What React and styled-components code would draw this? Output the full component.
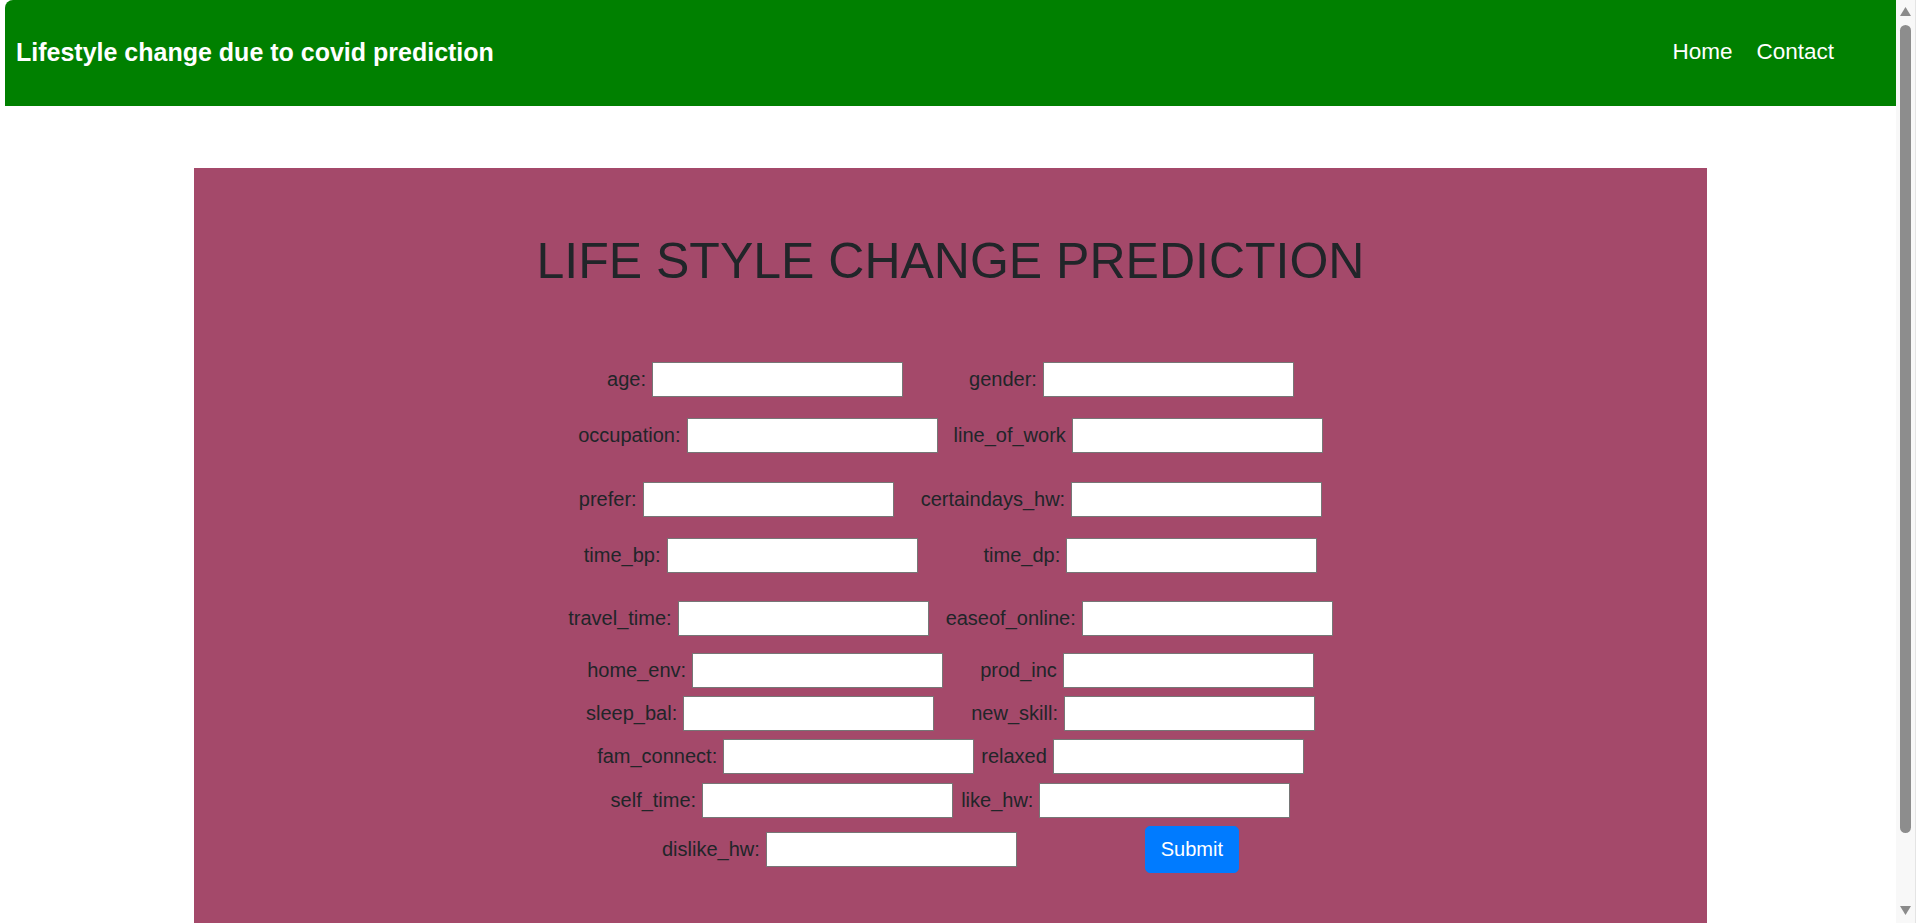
import React from 'react';
import styled, { createGlobalStyle } from 'styled-components';

const GlobalStyle = createGlobalStyle`
  html, body {
    margin: 0;
    height: 100%;
    overflow: hidden;
  }

  body {
    background: #fff;
    font-family: "Liberation Sans", Arial, sans-serif;
    color: #212529;
  }
`;

const Window = styled.div`
  display: flex;
  height: 100vh;
  overflow: hidden;
`;

const Viewport = styled.div`
  flex: 1;
  min-width: 0;
  padding-left: 5px;
  overflow: hidden;
`;

const ScrollBar = styled.div`
  width: 24px;
  flex-shrink: 0;
  box-sizing: border-box;
  display: flex;
  flex-direction: column;
  align-items: flex-start;
  padding-left: 4px;
  background: linear-gradient(to right, #f8f8f8 0 19px, #e4e4e4 19px 20px, #fff 20px);
`;

const Arrow = styled.svg`
  width: 11px;
  height: 9px;
  margin-top: ${props => props.$mt || 0}px;
  margin-bottom: ${props => props.$mb || 0}px;
  fill: #8b8b8b;
`;

const Thumb = styled.div`
  width: 11px;
  height: 808px;
  margin-top: 9px;
  border-radius: 6px;
  background: #8d8d8d;
`;

const Spacer = styled.div`
  flex: 1;
`;

const NavBar = styled.nav`
  height: 106px;
  box-sizing: border-box;
  display: flex;
  align-items: center;
  justify-content: space-between;
  padding: 0 62px 2px 11px;
  background: #008000;
  border-top-left-radius: 8px;
`;

const Brand = styled.a`
  color: #fff;
  font-size: 25px;
  font-weight: 700;
  text-decoration: none;
`;

const NavLinks = styled.div`
  display: flex;
  gap: 24px;
`;

const NavLink = styled.a`
  color: #fff;
  font-size: 22.5px;
  text-decoration: none;
`;

const Card = styled.section`
  width: 1513px;
  min-height: 814px;
  box-sizing: border-box;
  margin: 62px auto 0;
  padding: 62.7px 0 0;
  background: #a4496a;
`;

const Title = styled.h1`
  margin: 0;
  font-size: 50px;
  line-height: 60px;
  font-weight: 400;
  text-align: center;
  color: #212529;
`;

const Form = styled.form`
  display: flex;
  flex-direction: column;
`;

const Row = styled.div`
  display: flex;
  justify-content: center;
  align-items: center;
  gap: ${props => props.$gap}px;
  margin-top: ${props => props.$mt}px;
`;

const Field = styled.label`
  display: flex;
  align-items: center;
  gap: 6px;
  font-size: 20px;
  color: #212529;
`;

const Input = styled.input`
  width: 251px;
  height: 35px;
  box-sizing: border-box;
  margin: 0;
  padding: 1px 3px;
  border: 1px solid #767676;
  background: #fff;
  font-family: inherit;
  font-size: 16px;
`;

const SubmitButton = styled.button`
  height: 47px;
  padding: 0 15px;
  border: 1px solid #007bff;
  border-radius: 5px;
  background: #007bff;
  color: #fff;
  font-family: inherit;
  font-size: 20px;
  cursor: pointer;
`;

const rows = [
  { mt: 71, gap: 66, a: 'age:', b: 'gender:' },
  { mt: 21, gap: 16, a: 'occupation:', b: 'line_of_work' },
  { mt: 29, gap: 27, a: 'prefer:', b: 'certaindays_hw:' },
  { mt: 21, gap: 66, a: 'time_bp:', b: 'time_dp:' },
  { mt: 28, gap: 17, a: 'travel_time:', b: 'easeof_online:' },
  { mt: 17, gap: 37, a: 'home_env:', b: 'prod_inc' },
  { mt: 8, gap: 37, a: 'sleep_bal:', b: 'new_skill:' },
  { mt: 8, gap: 7, a: 'fam_connect:', b: 'relaxed' },
  { mt: 9, gap: 8, a: 'self_time:', b: 'like_hw:' },
];

const App = () => {
  return (
    <Window>
      <GlobalStyle />
      <Viewport>
        <NavBar>
          <Brand href="#">Lifestyle change due to covid prediction</Brand>
          <NavLinks>
            <NavLink href="#">Home</NavLink>
            <NavLink href="#">Contact</NavLink>
          </NavLinks>
        </NavBar>

        <Card>
          <Title>LIFE STYLE CHANGE PREDICTION</Title>
          <Form onSubmit={e => e.preventDefault()}>
            {rows.map(row => (
              <Row key={row.a} $mt={row.mt} $gap={row.gap}>
                <Field>
                  {row.a}
                  <Input type="text" />
                </Field>
                <Field>
                  {row.b}
                  <Input type="text" />
                </Field>
              </Row>
            ))}
            <Row $mt={8} $gap={128}>
              <Field>
                dislike_hw:
                <Input type="text" />
              </Field>
              <SubmitButton type="submit">Submit</SubmitButton>
            </Row>
          </Form>
        </Card>
      </Viewport>

      <ScrollBar>
        <Arrow $mt={7} viewBox="0 0 11 9">
          <polygon points="5.5,0 11,9 0,9" />
        </Arrow>
        <Thumb />
        <Spacer />
        <Arrow $mb={8} viewBox="0 0 11 9">
          <polygon points="0,0 11,0 5.5,9" />
        </Arrow>
      </ScrollBar>
    </Window>
  );
};

export default App;
